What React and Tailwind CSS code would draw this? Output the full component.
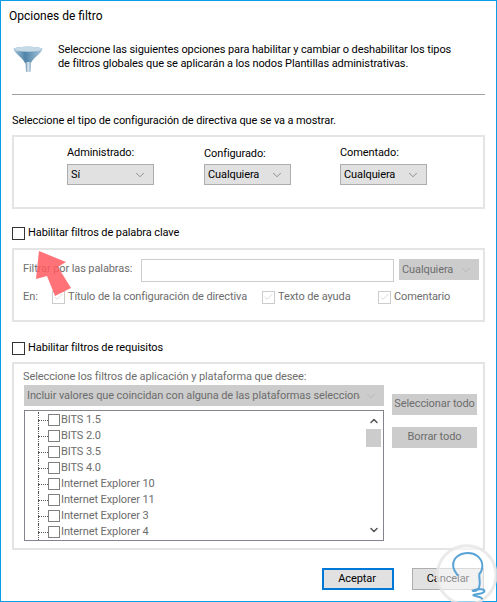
import React from 'react';
import { ChevronDown, ChevronUp, Check } from 'lucide-react';

const FONT = "font-['Roboto',sans-serif]";

const TREE_ITEMS = [
  'BITS 1.5',
  'BITS 2.0',
  'BITS 3.5',
  'BITS 4.0',
  'Internet Explorer 10',
  'Internet Explorer 11',
  'Internet Explorer 3',
  'Internet Explorer 4',
];

const FunnelIcon = () => (
  <svg width="30" height="27" viewBox="0 0 30 27" className="mt-[3px] shrink-0">
    <defs>
      <linearGradient id="funnelBody" x1="0" y1="0" x2="1" y2="0">
        <stop offset="0" stopColor="#a9c6da" />
        <stop offset="0.4" stopColor="#4f83a8" />
        <stop offset="1" stopColor="#a8c8dc" />
      </linearGradient>
      <linearGradient id="funnelStem" x1="0" y1="0" x2="1" y2="0">
        <stop offset="0" stopColor="#5f8cab" />
        <stop offset="0.5" stopColor="#dfe9f0" />
        <stop offset="1" stopColor="#7fa3bd" />
      </linearGradient>
    </defs>
    <path d="M0.5 3 C0.5 0 29.5 0 29.5 3 C29 7 19 13 18 17 L12 17 C11 13 1 7 0.5 3 Z" fill="url(#funnelBody)" />
    <ellipse cx="15" cy="3.2" rx="13.5" ry="2.6" fill="#c5d9e7" />
    <path d="M12.5 16 L18 16 L17.6 25.5 Q15 27 13 25.5 Z" fill="url(#funnelStem)" />
  </svg>
);

const Select = ({ value, className, disabled }) => (
  <div
    className={`flex h-[21px] items-center justify-between pl-[3px] pr-[6px] ${
      disabled ? 'bg-[#cccccc] text-[#6d6d6d]' : 'border border-[#adadad] bg-[#e1e1e1] text-black'
    } ${className}`}
  >
    <span className="overflow-hidden whitespace-nowrap pt-[1px]">{value}</span>
    <ChevronDown size={14} strokeWidth={1} className={`ml-[4px] shrink-0 ${disabled ? 'text-[#a8a8a8]' : 'text-[#555555]'}`} />
  </div>
);

const CheckBox = ({ label, className }) => (
  <div className={`flex h-[14px] items-center gap-[3px] text-black ${className}`}>
    <span className="h-[13px] w-[13px] shrink-0 border border-[#333333] bg-white" />
    <span className="pt-[1px]">{label}</span>
  </div>
);

const DisabledCheck = ({ label, className }) => (
  <div className={`flex items-center gap-[3px] whitespace-nowrap text-[#6d6d6d] ${className}`}>
    <span className="flex h-[13px] w-[13px] shrink-0 items-center justify-center border border-[#cccccc]">
      <Check size={12} strokeWidth={1} className="text-[#b0b0b0]" />
    </span>
    <span className="pt-[1px]">{label}</span>
  </div>
);

const GrayButton = ({ label, className }) => (
  <div className={`flex h-[21px] w-[85px] items-center justify-center whitespace-nowrap bg-[#cccccc] text-[#6d6d6d] ${className}`}>
    {label}
  </div>
);

const DropdownField = ({ label, value, className, labelClass }) => (
  <div className={`w-[87px] ${className}`}>
    <div className={`h-[20px] leading-[17px] ${labelClass}`}>{label}</div>
    <Select value={value} className="w-[87px]" />
  </div>
);

const TreeRow = ({ label }) => (
  <div className="relative flex h-[16px] items-center pl-[13px]">
    {/* tree guides */}
    <span className="absolute left-[13px] top-0 h-[16px] w-0 border-l border-dotted border-[#555555]" />
    <span className="w-[10px] border-t border-dotted border-[#555555]" />
    <span className="h-[12px] w-[12px] shrink-0 border border-[#808080]" />
    <span className="ml-[1px] whitespace-nowrap pt-[1px] text-[#6d6d6d]">{label}</span>
  </div>
);

export default function App() {
  return (
    <div className={`h-[602px] w-[497px] overflow-hidden bg-white ${FONT} text-[11px] tracking-[-0.1px] text-black`}>
      <div className="relative h-full border border-[#0a9ee8] pl-[11px] pr-[11px]">
        {/* Title */}
        <div className="-ml-[3px] h-[42px] pt-[6px] text-[12px] leading-[18px] tracking-normal">Opciones de filtro</div>

        {/* Header */}
        <div className="flex h-[51px] items-start gap-[15px] pl-[1px]">
          <FunnelIcon />
          <p className="whitespace-nowrap leading-[14px]">
            Seleccione las siguientes opciones para habilitar y cambiar o deshabilitar los tipos
            <br />
            de filtros globales que se aplicarán a los nodos Plantillas administrativas.
          </p>
        </div>
        <div className="h-px bg-[#a0a0a0]" />

        <div className="mt-[16px] h-[24px] pt-[1px] leading-[17px]">Seleccione el tipo de configuración de directiva que se va a mostrar.</div>

        {/* Directive type group */}
        <div className="flex h-[74px] border-2 border-[#e4e4e4] pl-[53px] pt-[7px]">
          <DropdownField label="Administrado:" value="Sí" />
          <DropdownField label="Configurado:" value="Cualquiera" className="ml-[50px]" labelClass="pt-[1px]" />
          <DropdownField label="Comentado:" value="Cualquiera" className="ml-[49px]" />
        </div>

        <CheckBox label="Habilitar filtros de palabra clave" className="mt-[17px]" />

        {/* Keyword group */}
        <div className="mt-[8px] h-[74px] border-2 border-[#e4e4e4] pl-[9px] pr-[4px] pt-[9px] text-[#6d6d6d]">
          <div className="flex items-start">
            <span className="w-[118px] whitespace-nowrap pt-[2px] leading-[16px]">Filtrar por las palabras:</span>
            <span className="h-[23px] w-[253px] border border-[#cccccc]" />
            <Select value="Cualquiera" disabled className="ml-[5px] w-[80px]" />
          </div>
          <div className="mt-[8px] flex h-[14px] items-center">
            <span className="w-[29px] pt-[1px]">En:</span>
            <DisabledCheck label="Título de la configuración de directiva" className="w-[210px]" />
            <DisabledCheck label="Texto de ayuda" className="w-[116px]" />
            <DisabledCheck label="Comentario" />
          </div>
        </div>

        <CheckBox label="Habilitar filtros de requisitos" className="mt-[19px]" />

        {/* Requirements group */}
        <div className="mt-[7px] h-[188px] border-2 border-[#e4e4e4] pl-[10px] pt-[4px] text-[#6d6d6d]">
          <div className="-ml-[1px] h-[17px] pt-[1px] leading-[16px]">Seleccione los filtros de aplicación y plataforma que desee:</div>
          <Select
            value="Incluir valores que coincidan con alguna de las plataformas seleccionadas"
            disabled
            className="w-[360px]"
          />
          <div className="flex items-start">
            <div className="relative mt-[4px] h-[131px] w-[360px] overflow-hidden border border-[#82868c] pt-[1px]">
              {TREE_ITEMS.map((item) => (
                <TreeRow key={item} label={item} />
              ))}
              {/* scrollbar */}
              <div className="absolute bottom-0 right-[2px] top-0 flex w-[15px] flex-col items-center justify-between py-[4px]">
                <ChevronUp size={12} strokeWidth={3} className="text-[#555555]" />
                <ChevronDown size={12} strokeWidth={3} className="text-[#555555]" />
              </div>
              <div className="absolute right-[2px] top-[18px] h-[18px] w-[15px] bg-[#cccccc]" />
            </div>
            <div className="ml-[8px] mt-[-12px]">
              <GrayButton label="Seleccionar todo" />
              <GrayButton label="Borrar todo" className="mt-[12px]" />
            </div>
          </div>
        </div>

        {/* Footer buttons */}
        <div className="mt-[18px] flex justify-end gap-[18px] pr-[1px]">
          <div className="flex h-[22px] w-[72px] items-center justify-center border-2 border-[#0078d7] bg-[#e1e1e1] pr-[2px] pt-[1px]">Aceptar</div>
          <div className="flex h-[22px] w-[72px] items-center justify-center border border-[#adadad] bg-[#e1e1e1] pt-[1px]">Cancelar</div>
        </div>

        {/* Red arrow annotation */}
        <svg className="pointer-events-none absolute left-[-1px] top-[-1px]" width="100" height="320" viewBox="0 0 100 320">
          <polygon points="39,251 66,262 58,267 71,288 55,296 47,276 36,279" fill="#ff5a60" fillOpacity="0.85" />
        </svg>

        {/* Watermark */}
        <svg className="pointer-events-none absolute left-[419px] top-[529px]" width="77" height="72" viewBox="0 0 231 216">
          <circle cx="140" cy="135" r="88" fill="#ffffff" fillOpacity="0.55" stroke="#e6e6e6" strokeOpacity="0.85" strokeWidth="9" />
          <path
            d="M112 135 C100 120 94 105 104 88 C116 68 152 62 172 78 C192 94 190 118 178 132 C176 150 186 165 172 180 C164 186 156 182 158 182 C172 176 200 176 192 186 C184 194 160 192 160 196 C170 200 184 200 186 206"
            fill="none"
            stroke="#5aa3d6"
            strokeWidth="6"
            strokeLinecap="round"
            strokeLinejoin="round"
          />
        </svg>
      </div>
    </div>
  );
}
